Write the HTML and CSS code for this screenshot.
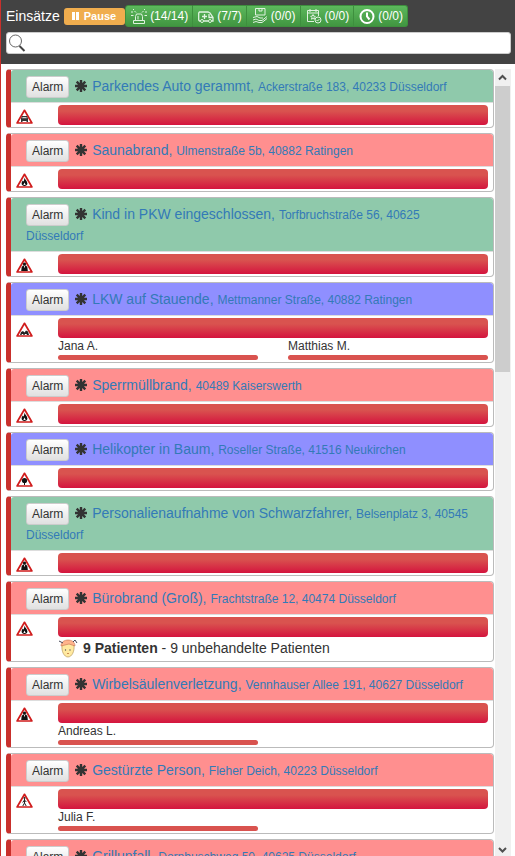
FILE: index.html
```
<!DOCTYPE html>
<html lang="de">
<head>
<meta charset="utf-8">
<title>Einsätze</title>
<link rel="stylesheet" href="styles.css">
</head>
<body>
<svg class="defs" aria-hidden="true">
  <symbol id="star" viewBox="0 0 12 12"><path d="M6 0v12M0 6h12M1.700 1.700l8.600 8.600M10.300 1.700l-8.600 8.600" stroke="#333" stroke-width="2.400"/><circle cx="6" cy="6" r="3.300" fill="#333"/></symbol>
  <symbol id="tri" viewBox="0 0 17 15"><path d="M8.500 1.300L15.900 14H1.100z" fill="#fff" stroke="#d01c1c" stroke-width="1.700" stroke-linejoin="round"/></symbol>
  <symbol id="car" viewBox="0 0 17 15"><use href="#tri"/><path d="M6 7h5l1 2.500V13h-1.500v-1h-4v1H5V9.500z" fill="#333"/><path d="M6.600 8h3.800l.5 1.300H6z" fill="#ccc"/></symbol>
  <symbol id="fire" viewBox="0 0 17 15"><use href="#tri"/><path d="M8.500 4.500c.2 2 2.900 3.300 2.900 6 0 1.600-1.200 2.500-2.900 2.500s-2.900-.9-2.900-2.500c0-1.400.8-2 1-3l.9 1c.6-1 .8-2.400 1-4z" fill="#111"/><path d="M8.500 9.500l1.200 2.500H7.400z" fill="#fff"/></symbol>
  <symbol id="person" viewBox="0 0 17 15"><use href="#tri"/><circle cx="8.500" cy="6" r="1.600" fill="#111"/><path d="M7 7.500h3l1.300 1.500.5 4H5.200l.5-4z" fill="#111"/><path d="M8 8h1v1.500H8z" fill="#ddd"/></symbol>
  <symbol id="crash" viewBox="0 0 17 15"><use href="#tri"/><path d="M4 13l1-3 2-1 1.500 1.500L10 8.500l2 1L13 13h-2l-.5-1H9l-.5 1h-1L7 12H6l-.5 1z" fill="#222"/></symbol>
  <symbol id="tree" viewBox="0 0 17 15"><use href="#tri"/><circle cx="8.500" cy="8.500" r="2.600" fill="#111"/><path d="M8 10h1v3H8z" fill="#111"/></symbol>
  <symbol id="walk" viewBox="0 0 17 15"><use href="#tri"/><circle cx="8.500" cy="5" r="1" fill="#222"/><path d="M8.500 6v4l-1.700 3M8.500 10l1.700 3M6.700 9.500L8.500 7l1.800 2" fill="none" stroke="#222"/></symbol>
</svg>
<main class="app">
  <header class="bar">
    <div class="tools">
      <h1 class="title">Einsätze</h1>
      <button class="pause" type="button"><svg width="7" height="8" viewBox="0 0 7 8" aria-hidden="true"><path d="M0 0h3v8H0zM4 0h3v8H4z" fill="#fff"/></svg>Pause</button>
      <div class="group">
        <button class="filter" type="button"><svg class="ico" viewBox="0 0 16 16" aria-hidden="true"><path d="M4.500 12.500V8.500l1-2.500h5l1 2.500v4M2.500 15.500v-3h11v3zM7 8v3.500M3.500 3L5 4.500M12.500 3L11 4.500M0 4h2M14 4h2M0 7.500h2.500M13.500 7.500H16M2 1l1 1M14 1l-1 1"/></svg>(14/14)</button>
        <button class="filter" type="button"><svg class="ico" viewBox="0 0 16 16" aria-hidden="true"><path d="M2.500 13H1.500L.7 12V5l.8-1H10l2 1 3 4.500V13h-1.500M5.500 13h5M6.500 6v5M4 8.500h5M11 6v3.500h4" stroke-width="1.300"/><circle cx="4" cy="13" r="1.500"/><circle cx="12" cy="13" r="1.500"/></svg>(7/7)</button>
        <button class="filter" type="button"><svg class="ico" viewBox="0 0 16 16" aria-hidden="true"><path d="M3.500.5h9.500v6.500H3.500zM7 .5v2.500h3V.5M1 9.500l4-1 3 1.500h3M1 12l3-1 3 1.500h3l5-4M1 14.500l3-1 3 1h3l5-4"/></svg>(0/0)</button>
        <button class="filter" type="button"><svg class="ico" viewBox="0 0 16 16" aria-hidden="true"><path d="M8 13.500H1.500v-11h11V8M1.500 5h11M4 1v3M10 1v3M7 6.500l.7 1.600 1.600.2-1.200 1.200.4 1.700L7 10.400l-1.500.8.4-1.700-1.200-1.200 1.600-.2zM10.500 12l1 1 2-2"/><circle cx="12" cy="12" r="3"/></svg>(0/0)</button>
        <button class="filter" type="button"><svg class="ico clock" viewBox="0 0 16 16" aria-hidden="true"><circle cx="8" cy="8.500" r="6.500"/><path d="M8 4.500v4l2.500 3"/></svg>(0/0)</button>
      </div>
    </div>
    <div class="search">
      <svg class="lens" viewBox="0 0 18 18" aria-hidden="true"><circle cx="7.500" cy="7" r="6" fill="none" stroke="#666"/><path d="M11.500 12l5 5" stroke="#444" stroke-width="2"/></svg>
      <input class="query" type="text" aria-label="Einsätze durchsuchen">
    </div>
  </header>
  <div class="view">
    <div class="list">
      <section class="card">
        <div class="head green"><button class="alarm" type="button">Alarm</button> <svg class="star"><use href="#star"/></svg> <a href="#">Parkendes Auto gerammt, <small>Ackerstraße 183, 40233 Düsseldorf</small></a></div>
        <div class="body"><svg class="sign"><use href="#car"/></svg><div class="info"><div class="meter"></div></div></div>
      </section>
      <section class="card">
        <div class="head red"><button class="alarm" type="button">Alarm</button> <svg class="star"><use href="#star"/></svg> <a href="#">Saunabrand, <small>Ulmenstraße 5b, 40882 Ratingen</small></a></div>
        <div class="body"><svg class="sign"><use href="#fire"/></svg><div class="info"><div class="meter"></div></div></div>
      </section>
      <section class="card">
        <div class="head green"><button class="alarm" type="button">Alarm</button> <svg class="star"><use href="#star"/></svg> <a href="#">Kind in PKW eingeschlossen, <small>Torfbruchstraße 56, 40625 Düsseldorf</small></a></div>
        <div class="body"><svg class="sign"><use href="#person"/></svg><div class="info"><div class="meter"></div></div></div>
      </section>
      <section class="card">
        <div class="head blue"><button class="alarm" type="button">Alarm</button> <svg class="star"><use href="#star"/></svg> <a href="#">LKW auf Stauende, <small>Mettmanner Straße, 40882 Ratingen</small></a></div>
        <div class="body"><svg class="sign"><use href="#crash"/></svg><div class="info"><div class="meter"></div>
          <div class="people"><div class="person">Jana A.</div><div class="person">Matthias M.</div></div></div></div>
      </section>
      <section class="card">
        <div class="head red"><button class="alarm" type="button">Alarm</button> <svg class="star"><use href="#star"/></svg> <a href="#">Sperrmüllbrand, <small>40489 Kaiserswerth</small></a></div>
        <div class="body"><svg class="sign"><use href="#fire"/></svg><div class="info"><div class="meter"></div></div></div>
      </section>
      <section class="card">
        <div class="head blue"><button class="alarm" type="button">Alarm</button> <svg class="star"><use href="#star"/></svg> <a href="#">Helikopter in Baum, <small>Roseller Straße, 41516 Neukirchen</small></a></div>
        <div class="body"><svg class="sign"><use href="#tree"/></svg><div class="info"><div class="meter"></div></div></div>
      </section>
      <section class="card">
        <div class="head green"><button class="alarm" type="button">Alarm</button> <svg class="star"><use href="#star"/></svg> <a href="#">Personalienaufnahme von Schwarzfahrer, <small>Belsenplatz 3, 40545 Düsseldorf</small></a></div>
        <div class="body"><svg class="sign"><use href="#person"/></svg><div class="info"><div class="meter"></div></div></div>
      </section>
      <section class="card">
        <div class="head red"><button class="alarm" type="button">Alarm</button> <svg class="star"><use href="#star"/></svg> <a href="#">Bürobrand (Groß), <small>Frachtstraße 12, 40474 Düsseldorf</small></a></div>
        <div class="body"><svg class="sign"><use href="#fire"/></svg><div class="info"><div class="meter"></div>
          <div class="patients"><svg class="face" viewBox="0 0 20 20" aria-hidden="true"><path d="M4 8c0-4 12-4 12 0 .6 5-2 11-6 11S3.400 13 4 8z" fill="#ffe9a0" stroke="#b8995a" stroke-width=".7"/><path d="M3 8C3 0 17 0 17 8l-6-2z" fill="#ffb48c" stroke="#c5714d" stroke-width=".6"/><path d="M1 3l4 2M15 4l2-2 2 3" stroke="#445" fill="none"/><circle cx="7.500" cy="12" r=".7" fill="#555"/><circle cx="12" cy="12" r=".7" fill="#555"/><path d="M9 15.500h2" stroke="#c98a55"/></svg><span><b>9 Patienten</b> - 9 unbehandelte Patienten</span></div></div></div>
      </section>
      <section class="card">
        <div class="head red"><button class="alarm" type="button">Alarm</button> <svg class="star"><use href="#star"/></svg> <a href="#">Wirbelsäulenverletzung, <small>Vennhauser Allee 191, 40627 Düsseldorf</small></a></div>
        <div class="body"><svg class="sign"><use href="#person"/></svg><div class="info"><div class="meter"></div>
          <div class="people"><div class="person">Andreas L.</div></div></div></div>
      </section>
      <section class="card">
        <div class="head red"><button class="alarm" type="button">Alarm</button> <svg class="star"><use href="#star"/></svg> <a href="#">Gestürzte Person, <small>Fleher Deich, 40223 Düsseldorf</small></a></div>
        <div class="body"><svg class="sign"><use href="#walk"/></svg><div class="info"><div class="meter"></div>
          <div class="people"><div class="person">Julia F.</div></div></div></div>
      </section>
      <section class="card">
        <div class="head red"><button class="alarm" type="button">Alarm</button> <svg class="star"><use href="#star"/></svg> <a href="#">Grillunfall, <small>Dornbuschweg 50, 40625 Düsseldorf</small></a></div>
        <div class="body"><svg class="sign"><use href="#fire"/></svg><div class="info"><div class="meter"></div></div></div>
      </section>
    </div>
    <div class="scroll" aria-hidden="true">
      <svg class="arrow" viewBox="0 0 15 17"><path d="M4 10.500L7.500 7l3.500 3.500" fill="none" stroke="#505050" stroke-width="2"/></svg>
      <div class="track"><div class="thumb"></div></div>
      <svg class="arrow" viewBox="0 0 15 17"><path d="M4 9l3.500 3.500L11 9" fill="none" stroke="#505050" stroke-width="2"/></svg>
    </div>
  </div>
</main>
</body>
</html>
```
FILE: styles.css
```
* { box-sizing: border-box; }
body {
  margin: 0;
  font: 14px/20px "Liberation Sans", Arial, sans-serif;
  color: #333;
  background: #fff;
}
.defs { display: none; }
button { font-family: inherit; }
.app {
  display: flex;
  flex-direction: column;
  height: 100vh;
  overflow: hidden;
  border-left: 1px solid #c9302c;
}
.bar {
  flex: none;
  padding: 5px 4px 10px 5px;
  background: #434343;
}
.tools { display: flex; align-items: center; height: 22px; margin-bottom: 5px; }
.title { margin: 0 4px 0 0; font-size: 14px; font-weight: 400; line-height: 20px; color: #fff; }
.pause {
  display: flex;
  align-items: center;
  gap: 5px;
  height: 17px;
  padding: 0 9px 0 8px;
  border: 0;
  border-radius: 3px;
  background: #f0ad4e;
  color: #fff;
  font-size: 11px;
  font-weight: 700;
}
.group { display: flex; }
.filter {
  display: flex;
  align-items: center;
  gap: 3px;
  height: 22px;
  padding: 0 4px 0 5px;
  border: 1px solid #3e8f3e;
  border-left-width: 0;
  background: linear-gradient(#5cb85c, #419641);
  color: #fff;
  font-size: 12px;
}
.filter:first-child { border-left-width: 1px; border-radius: 3px 0 0 3px; }
.filter:last-child { border-radius: 0 3px 3px 0; }
.ico { width: 16px; height: 16px; fill: none; stroke: #e0f2e0; }
.clock { stroke: #fff; stroke-width: 2; }
.search {
  display: flex;
  align-items: center;
  height: 22px;
  border: 1px solid #ccc;
  border-radius: 3px;
  background: #fff;
}
.lens { flex: none; width: 18px; height: 18px; margin-left: 1px; }
.query { flex: 1; min-width: 0; height: 20px; border: 0; padding: 0 4px; outline: 0; background: transparent; font: inherit; }
.view {
  display: flex;
  flex: 1;
  min-height: 0;
  padding: 5px 4px 0 5px;
}
.list { flex: 1; min-width: 0; overflow: hidden; margin-right: 1px; }
.card {
  margin-bottom: 5px;
  border: 1px solid #bbb;
  border-left: 5px solid #c9302c;
  border-radius: 4px;
  background: #fff;
}
.head {
  padding: 6px 15px 5px;
  border-bottom: 1px solid #ddd;
  border-radius: 3px 3px 0 0;
  line-height: 21px;
}
.green { background: #8fc9ab; }
.red { background: #ff8f8f; }
.blue { background: #8f8fff; }
.head a { color: #337ab7; text-decoration: none; }
.head small { font-size: 12px; line-height: 16px; }
.alarm {
  height: 22px;
  margin: 0 0 -1px;
  padding: 0 5px;
  border: 1px solid #ccc;
  border-radius: 3px;
  background: linear-gradient(#fff, #e0e0e0);
  color: #333;
  font-size: 12px;
  line-height: 20px;
  vertical-align: top;
}
.star { width: 12px; height: 12px; margin: 0 1px 0 2px; vertical-align: -1px; }
.body { display: flex; padding: 2px 5px; }
.sign { flex: none; width: 17px; height: 15px; margin: 4px 25px 0 0; }
.info { flex: 1; min-width: 0; }
.meter {
  height: 20px;
  border-radius: 4px;
  background: linear-gradient(#d9534f 30%, #d4143e);
}
.people { display: grid; grid-template-columns: 1fr 1fr; column-gap: 30px; }
.person { font-size: 12px; line-height: 17px; }
.person::after {
  content: "";
  display: block;
  height: 5px;
  border-radius: 3px;
  background: #d9534f;
}
.patients { display: flex; align-items: center; gap: 5px; height: 22px; }
.face { width: 20px; height: 20px; }
.scroll { display: flex; flex-direction: column; width: 16px; background: #f0f0f0; }
.arrow { flex: none; width: 15px; height: 17px; }
.track { flex: 1; }
.thumb { width: 15px; height: 38%; background: #cdcdcd; }
```
